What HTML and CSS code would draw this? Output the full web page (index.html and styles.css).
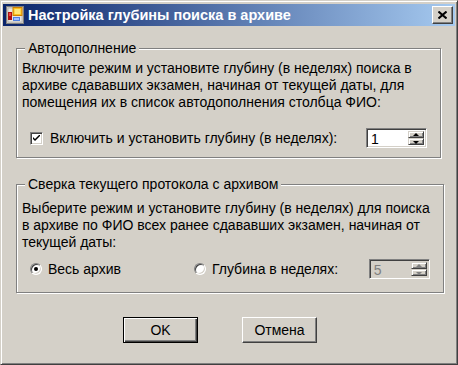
FILE: index.html
```html
<!DOCTYPE html>
<html lang="ru">
<head>
    <meta charset="UTF-8">
    <title>Настройка глубины поиска в архиве</title>
    <link rel="stylesheet" href="styles.css">
</head>
<body>
    <div class="window">
        <div class="titlebar">
            <svg class="app-icon" width="18" height="18" viewBox="0 0 18 18">
                <rect x="0.5" y="0.5" width="17" height="17" fill="#d4d0c8" stroke="#808080"/>
                <rect x="2" y="2" width="14" height="14" fill="#e8e6e0" stroke="#a0a0a0" stroke-width="0.6"/>
                <rect x="2" y="6" width="4" height="8" fill="#b01010"/>
                <rect x="3" y="7" width="2" height="3" fill="#f04040"/>
                <rect x="7" y="1.5" width="9" height="8" fill="#f8c020" stroke="#d08000"/>
                <rect x="8.5" y="3" width="6" height="5" fill="#ffe878"/>
                <rect x="7" y="11" width="7" height="4" fill="#5080e0"/>
                <rect x="8" y="12" width="5" height="2" fill="#a0c0ff"/>
            </svg>
            <span class="title">Настройка глубины поиска в архиве</span>
            <button class="close-btn" aria-label="Закрыть">
                <svg width="9" height="8" viewBox="0 0 9 8">
                    <path d="M0.5 0.5 L8.5 7.5 M8.5 0.5 L0.5 7.5" stroke="#000" stroke-width="2"/>
                </svg>
            </button>
        </div>

        <div class="dialog">
            <fieldset class="group group-auto">
                <legend>Автодополнение</legend>
                <p class="hint">Включите режим и установите глубину (в неделях) поиска в<br>архиве сдававших экзамен, начиная от текущей даты, для<br>помещения их в список автодополнения столбца ФИО:</p>
                <div class="option-row">
                    <label class="choice">
                        <span class="checkbox">
                            <svg width="7" height="7" viewBox="0 0 7 7"><path d="M0 2 L0 4 L2 6 L7 1 L7 -1 L2 4 Z" fill="#000"/></svg>
                        </span>
                        Включить и установить глубину (в неделях):
                    </label>
                    <div class="spinner">
                        <span class="spin-value">1</span>
                        <div class="spin-btns">
                            <span class="spin-btn up"></span>
                            <span class="spin-btn down"></span>
                        </div>
                    </div>
                </div>
            </fieldset>

            <fieldset class="group group-compare">
                <legend>Сверка текущего протокола с архивом</legend>
                <p class="hint">Выберите режим и установите глубину (в неделях) для поиска<br>в архиве по ФИО всех ранее сдававших экзамен, начиная от<br>текущей даты:</p>
                <div class="option-row">
                    <label class="choice choice-all">
                        <span class="radio checked"></span>
                        Весь архив
                    </label>
                    <label class="choice">
                        <span class="radio"></span>
                        Глубина в неделях:
                    </label>
                    <div class="spinner disabled">
                        <span class="spin-value">5</span>
                        <div class="spin-btns">
                            <span class="spin-btn up"></span>
                            <span class="spin-btn down"></span>
                        </div>
                    </div>
                </div>
            </fieldset>

            <div class="actions">
                <button class="btn btn-default">OK</button>
                <button class="btn">Отмена</button>
            </div>
        </div>
    </div>
</body>
</html>
```

FILE: styles.css
```css
:root {
    --face: #d4d0c8;
    --shadow: #808080;
    --dark: #404040;
    --light: #ffffff;
}

* {
    margin: 0;
    padding: 0;
    box-sizing: border-box;
}

body {
    font-family: 'Liberation Sans', Arial, sans-serif;
    font-size: 14px;
    color: #000;
    background: var(--face);
}

.window {
    width: 458px;
    height: 365px;
    background: var(--face);
    border: 1px solid;
    border-color: var(--face) var(--dark) var(--dark) var(--face);
    box-shadow: inset 1px 1px 0 var(--light), inset -1px -1px 0 var(--shadow);
    padding: 3px 2px 2px 2px;
}

.titlebar {
    height: 22px;
    display: flex;
    align-items: center;
    padding: 0 2px 0 3px;
    background: linear-gradient(to right, #0a246a, #a6caf0);
}

.app-icon {
    flex: none;
}

.title {
    flex: 1;
    margin-left: 4px;
    color: #fff;
    font-weight: 700;
    font-size: 14.5px;
    white-space: nowrap;
}

.close-btn {
    width: 21px;
    height: 18px;
    display: flex;
    align-items: center;
    justify-content: center;
    background: var(--face);
    border: 1px solid;
    border-color: var(--light) var(--dark) var(--dark) var(--light);
    box-shadow: inset -1px -1px 0 var(--shadow);
}

.dialog {
    padding: 14px 14px 0 13px;
}

/* etched group box */
.group {
    border: 1px solid var(--shadow);
    box-shadow: inset 1px 1px 0 var(--light), 1px 1px 0 var(--light);
    padding: 0 13px 9px 5px;
}

.group legend {
    line-height: 16px;
    padding: 0 3px;
    margin-left: 3px;
    background: var(--face);
}

.hint {
    line-height: 17px;
    white-space: nowrap;
}

.group-auto .hint {
    margin-top: 4px;
}

.group-auto .option-row {
    margin-top: 17px;
}

.group-compare {
    margin-top: 18px;
    padding-bottom: 13px;
}

.group-compare .hint {
    margin-top: 8px;
}

.group-compare .option-row {
    margin-top: 8px;
}

.option-row {
    display: flex;
    align-items: center;
    height: 20px;
    padding-left: 8px;
}

.choice {
    display: flex;
    align-items: center;
    white-space: nowrap;
}

.choice-all {
    width: 164px;
}

.checkbox {
    width: 13px;
    height: 13px;
    margin-right: 7px;
    display: flex;
    align-items: center;
    justify-content: center;
    background: #fff;
    border: 1px solid;
    border-color: var(--shadow) var(--light) var(--light) var(--shadow);
    box-shadow: inset 1px 1px 0 var(--dark), inset -1px -1px 0 var(--face);
}

.radio {
    position: relative;
    width: 12px;
    height: 12px;
    margin-right: 6px;
    border-radius: 50%;
    background: #fff;
    border: 1px solid;
    border-color: var(--shadow) var(--light) var(--light) var(--shadow);
    box-shadow: inset 1px 1px 0 var(--dark), inset -1px -1px 0 var(--face);
}

.radio.checked::after {
    content: '';
    position: absolute;
    left: 3px;
    top: 3px;
    width: 4px;
    height: 4px;
    border-radius: 50%;
    background: #000;
}

.spinner {
    margin-left: auto;
    width: 61px;
    height: 20px;
    display: flex;
    background: #fff;
    border: 1px solid;
    border-color: var(--shadow) var(--light) var(--light) var(--shadow);
    box-shadow: inset 1px 1px 0 var(--dark), inset -1px -1px 0 var(--face);
    padding: 2px;
}

.spin-value {
    flex: 1;
    line-height: 16px;
    padding-left: 2px;
}

.spin-btns {
    width: 16px;
    display: flex;
    flex-direction: column;
}

.spin-btn {
    position: relative;
    height: 8px;
    background: var(--face);
    border: 1px solid;
    border-color: var(--face) var(--dark) var(--dark) var(--face);
    box-shadow: inset 1px 1px 0 var(--light), inset -1px -1px 0 var(--shadow);
}

.spin-btn::after {
    content: '';
    position: absolute;
    left: 4px;
    width: 0;
    height: 0;
    border-left: 3px solid transparent;
    border-right: 3px solid transparent;
}

.spin-btn.up::after {
    top: 1px;
    border-bottom: 3px solid #000;
}

.spin-btn.down::after {
    top: 2px;
    border-top: 3px solid #000;
}

.spinner.disabled {
    background: var(--face);
}

.spinner.disabled .spin-value {
    color: var(--shadow);
}

.spinner.disabled .spin-btn.up::after {
    border-bottom-color: var(--shadow);
}

.spinner.disabled .spin-btn.down::after {
    border-top-color: var(--shadow);
}

.actions {
    display: flex;
    gap: 44px;
    margin-top: 24px;
    padding-left: 107px;
}

.btn {
    width: 75px;
    height: 26px;
    font-family: 'Liberation Sans', Arial, sans-serif;
    font-size: 14px;
    color: #000;
    background: var(--face);
    border: 1px solid;
    border-color: var(--light) var(--dark) var(--dark) var(--light);
    box-shadow: inset -1px -1px 0 var(--shadow);
}

.btn-default {
    border-color: #000;
    box-shadow: inset 1px 1px 0 var(--light), inset -1px -1px 0 var(--dark), inset -2px -2px 0 var(--shadow);
}
```
